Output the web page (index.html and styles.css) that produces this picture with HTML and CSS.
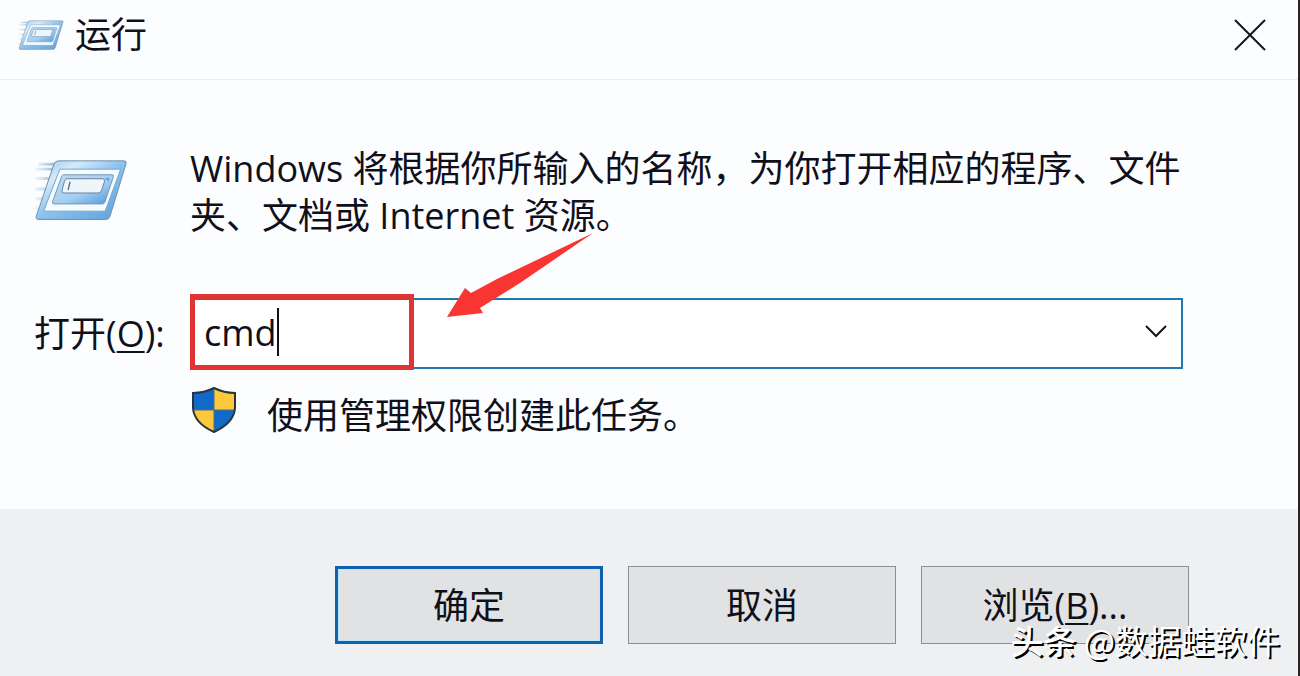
FILE: index.html
```html
<!DOCTYPE html>
<html lang="zh-CN">
<head>
    <meta charset="UTF-8">
    <meta name="viewport" content="width=device-width, initial-scale=1.0">
    <title>运行</title>
    <link rel="stylesheet" href="styles.css">
</head>
<body>
    <svg class="symbols" aria-hidden="true">
        <defs>
            <linearGradient id="frame" x1="0" y1="0" x2="1" y2="1">
                <stop offset="0" stop-color="#8fc3ec"/>
                <stop offset="0.25" stop-color="#d5eafa"/>
                <stop offset="0.5" stop-color="#8cc2ee"/>
                <stop offset="1" stop-color="#5b9fda"/>
            </linearGradient>
            <linearGradient id="panel" x1="0" y1="0" x2="1" y2="1">
                <stop offset="0" stop-color="#b9dbf5"/>
                <stop offset="0.55" stop-color="#a5d0f3"/>
                <stop offset="1" stop-color="#4b96d9"/>
            </linearGradient>
            <linearGradient id="trail" x1="0" y1="0" x2="1" y2="0">
                <stop offset="0" stop-color="#a9cdea" stop-opacity="0.2"/>
                <stop offset="1" stop-color="#7fb0da"/>
            </linearGradient>
            <symbol id="run-icon" viewBox="42 56 284 186">
                <path d="M56 67h56v9H54zM46 82h60v8H48zM46 110h52v9H46zM46 141h44v10H48zM46 171h36v10H46zM46 199h24v10H46z" fill="url(#trail)"/>
                <path d="M115 61H314q9 0 6 9L272 227q-3 11-13 11H56q-10 0-7-10L102 72q4-11 13-11z" fill="url(#frame)" stroke="#718ea8" stroke-width="3"/>
                <path d="M120 86h184L257 213H71z" fill="#f3fbff" stroke="#79a5c9" stroke-width="3"/>
                <path d="M132 103h146q5 0 4 5l-26 78q-2 5-8 5H103q-7 0-5-6l27-76q2-6 7-6z" fill="url(#panel)" stroke="#7796b3" stroke-width="3"/>
                <path d="M142 115h106q9 0 7 8l-9 27q-2 8-10 8H132q-8 0-5-9l7-26q2-8 8-8z" fill="#eef5fb" stroke="#6d8299" stroke-width="3"/>
                <path d="M151 124l-6 25" stroke="#5c7086" stroke-width="4"/>
                <path d="M257 112l13 1-3 12z" fill="#6a9ce6"/>
            </symbol>
        </defs>
    </svg>

    <div class="dialog">
        <header class="title-bar">
            <svg class="title-icon" aria-hidden="true"><use href="#run-icon"/></svg>
            <h1>运行</h1>
            <button class="close" type="button" aria-label="关闭">
                <svg viewBox="0 0 32 32" aria-hidden="true"><path d="M1 1l30 30M31 1L1 31"/></svg>
            </button>
        </header>

        <main class="content">
            <svg class="run-icon" aria-hidden="true"><use href="#run-icon"/></svg>
            <p class="description">Windows 将根据你所输入的名称，为你打开相应的程序、文件<br>夹、文档或 Internet 资源。</p>

            <label class="open-label" for="command">打开(<u>O</u>):</label>
            <div class="combo">
                <input id="command" type="text" value="cmd" autocomplete="off" spellcheck="false">
                <span class="caret"></span>
                <button class="drop" type="button" aria-label="展开">
                    <svg viewBox="0 0 22 14" aria-hidden="true"><path d="M1 1l10 10L21 1"/></svg>
                </button>
                <div class="highlight"></div>
                <svg class="arrow" viewBox="0 0 146 84" aria-hidden="true"><path d="M146 0L50 46 24 60 18 55 0 84 36 80 33 75 73 50z"/></svg>
            </div>

            <div class="admin">
                <svg class="shield" viewBox="0 0 46 48" aria-hidden="true">
                    <clipPath id="shield-shape"><path d="M2 7Q13 7 23 2q10 5 21 5v15Q43 37 23 46 3 37 2 22z"/></clipPath>
                    <g clip-path="url(#shield-shape)">
                        <path d="M0 0h23v24H0z" fill="#1169ca"/>
                        <path d="M23 0h23v24H23zM0 24h23v24H0z" fill="#fdc83c"/>
                        <path d="M23 24h23v24H23z" fill="#1169ca"/>
                        <path d="M23 0v48M0 24h46" stroke="#5c6f6a" stroke-width="1"/>
                    </g>
                    <path d="M2 7Q13 7 23 2q10 5 21 5v15Q43 37 23 46 3 37 2 22z" fill="none" stroke="#27333d" stroke-width="2"/>
                </svg>
                <span>使用管理权限创建此任务。</span>
            </div>
        </main>

        <footer class="actions">
            <button class="primary" type="button">确定</button>
            <button type="button">取消</button>
            <button type="button">浏览(<u>B</u>)...</button>
        </footer>
        <div class="watermark"><b>头条</b> @数据蛙软件</div>
    </div>
</body>
</html>
```
FILE: styles.css
```css
* {
    box-sizing: border-box;
    margin: 0;
    padding: 0;
}

body {
    font-family: "Open Sans", "Noto Sans CJK SC", sans-serif;
    font-size: 36px;
    line-height: 47px;
    color: #10101a;
    background: #fcfdfe;
}

button,
input {
    font: inherit;
    color: inherit;
}

u {
    text-decoration-thickness: 2px;
    text-underline-offset: 4px;
}

.symbols {
    position: absolute;
    width: 0;
    height: 0;
}

.dialog {
    position: relative;
    display: flex;
    flex-direction: column;
    min-height: 100vh;
    border-right: 2px solid #2b2426;
}

.title-bar {
    display: flex;
    align-items: center;
    gap: 11px;
    height: 80px;
    padding: 0 32px 10px 18px;
    border-bottom: 1px solid #e9edf0;
}

.title-icon {
    width: 46px;
    height: 32px;
}

.title-bar h1 {
    font-size: 36px;
    font-weight: 400;
}

.close {
    margin-left: auto;
    width: 32px;
    height: 32px;
    border: none;
    background: none;
}

.close svg,
.drop svg {
    display: block;
    width: 100%;
    fill: none;
    stroke: #14141c;
    stroke-width: 2;
}

.content {
    flex: 1;
    display: grid;
    grid-template-columns: 156px 1fr;
    align-content: start;
    padding: 65px 115px 36px 34px;
}

.run-icon {
    width: 94px;
    height: 64px;
    margin-top: 13px;
}

.description {
    white-space: nowrap;
}

.open-label {
    align-self: center;
    margin-top: 59px;
    white-space: nowrap;
}

.combo {
    position: relative;
    display: flex;
    align-items: center;
    height: 71px;
    margin-top: 59px;
    padding: 0 14px 3px 12px;
    border: 2px solid #1f79ad;
    background: #fff;
}

.combo input {
    field-sizing: content;
    border: none;
    outline: none;
    background: none;
}

.caret {
    width: 2px;
    height: 48px;
    background: #10101a;
}

.drop {
    width: 22px;
    margin-left: auto;
    border: none;
    background: none;
}

.highlight {
    position: absolute;
    top: -6px;
    left: -2px;
    width: 224px;
    height: 76px;
    border: 5px solid #df3434;
}

.arrow {
    position: absolute;
    top: -67px;
    left: 255px;
    width: 146px;
    height: 84px;
    fill: #f93531;
}

.admin {
    grid-column: 2;
    display: flex;
    align-items: flex-start;
    gap: 29px;
    margin-top: 17px;
    line-height: 60px;
}

.shield {
    width: 48px;
    height: 48px;
}

.actions {
    display: flex;
    justify-content: flex-end;
    gap: 25px;
    padding: 57px 109px 32px 34px;
    background: #eef0f2;
}

.actions button {
    width: 268px;
    height: 78px;
    border: 1px solid #8d9093;
    background: #e1e2e3;
}

.actions .primary {
    border: 3px solid #0f62b0;
    box-shadow: inset 0 0 0 1px #bfe6fb;
}

.watermark {
    position: absolute;
    right: 18px;
    bottom: 12px;
    font-family: "Noto Sans CJK SC", sans-serif;
    font-size: 33px;
    color: #fff;
    text-shadow: 2px 2px 0 #000;
}

.watermark b {
    font-weight: 500;
}
```
